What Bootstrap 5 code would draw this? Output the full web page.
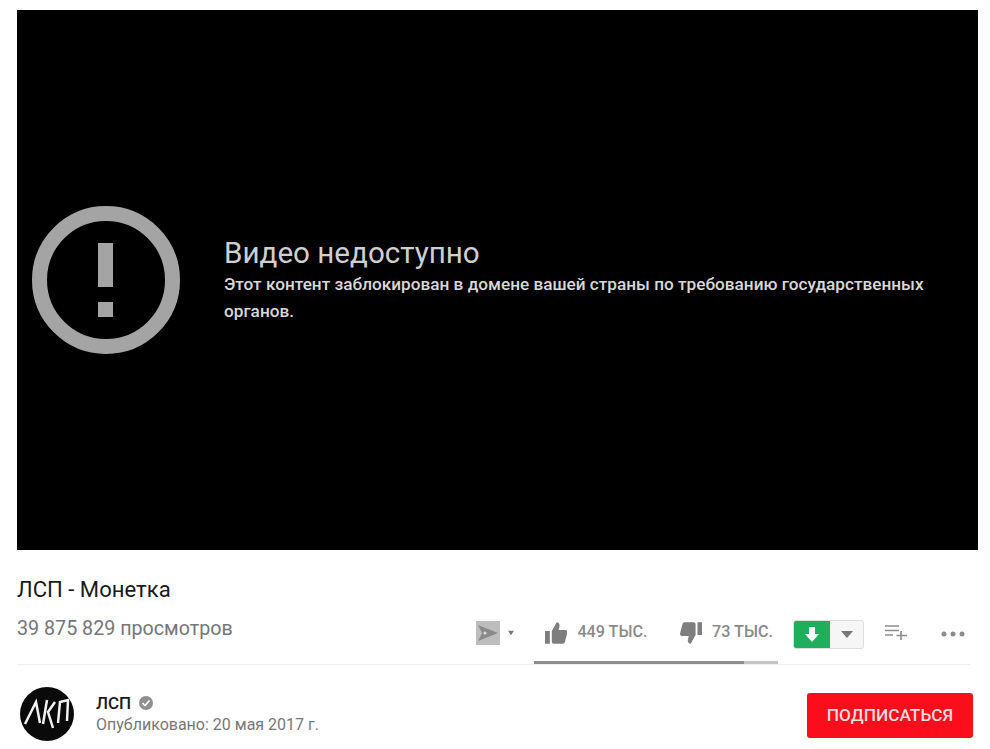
<!DOCTYPE html>
<html lang="ru">

<head>
    <meta charset="UTF-8">
    <meta name="viewport" content="width=device-width, initial-scale=1.0">
    <title>ЛСП - Монетка</title>
    <link href="https://cdn.jsdelivr.net/npm/bootstrap@5.3.0/dist/css/bootstrap.min.css" rel="stylesheet">
    <style>
        body {
            font-family: Roboto, 'Noto Sans', sans-serif;
            background-color: #fff;
            overflow: hidden;
        }

        .watch-page {
            padding: 10px 12px 0 17px;
        }

        .player-box {
            height: 540px;
            background-color: #000;
            padding-left: 15px;
            gap: 44px;
        }

        .player-title {
            font-size: 29.6px;
            line-height: 32px;
            font-weight: 400;
            color: #cfcfcf;
            margin: 2px 0 2px;
        }

        .player-text {
            font-size: 17.2px;
            line-height: 27px;
            font-weight: 500;
            color: #d8d8d8;
            width: 715px;
        }

        .video-name {
            font-size: 22.1px;
            line-height: 28px;
            color: #1a1a1a;
            margin: 25px 0 0;
            font-weight: 400;
        }

        .info-row {
            height: 62px;
            margin-right: 8px;
            border-bottom: 1px solid #eee;
        }

        .view-count {
            font-size: 19.7px;
            line-height: 24px;
            color: #767676;
            margin-top: 14px;
        }

        .rate-group {
            width: 244px;
            height: 61px;
        }

        .rate-items {
            height: 58px;
            padding: 1px 5px 0 11px;
            gap: 10px;
        }

        .rate-num {
            font-size: 16.2px;
            font-weight: 500;
            color: #8a8a8a;
            white-space: nowrap;
        }

        .dislike-icon {
            margin-left: 22px;
        }

        .rate-bar {
            height: 3px;
            background-color: #c4c4c4;
        }

        .rate-bar-fill {
            background-color: #8c8c8c;
        }

        .share-box {
            height: 58px;
            padding-top: 1px;
            margin-right: 20px;
        }

        .dl-btn {
            width: 71px;
            height: 29px;
            margin: 17px 0 0 15px;
            border: 1px solid #ddd;
            border-radius: 3px;
            background-color: #f6f6f6;
            overflow: hidden;
        }

        .dl-green {
            width: 37px;
            margin: -1px 0 -1px -1px;
            background-color: #1fae5c;
        }

        .more-box {
            height: 58px;
            padding: 0 0 0 21px;
        }

        .dots-icon {
            margin: 3px 5px 0 34px;
        }

        .channel-row {
            padding: 22px 5px 0 3px;
        }

        .channel-pic {
            width: 54px;
            height: 54px;
            margin-right: 22px;
            flex-shrink: 0;
        }

        .channel-text {
            margin-top: 5px;
        }

        .channel-name {
            font-size: 17px;
            line-height: 22px;
            font-weight: 500;
            color: #1a1a1a;
        }

        .publish-date {
            font-size: 16px;
            line-height: 21px;
            color: #777;
        }

        .subscribe-btn {
            width: 166px;
            height: 45px;
            padding: 0;
            margin-top: 6px;
            background-color: #fb0d1b;
            border: 0;
            border-radius: 3px;
            color: #f6dcdc;
            font-size: 17.3px;
            font-weight: 500;
        }
    </style>
</head>

<body>
    <div class="watch-page">
        <div class="player-box d-flex align-items-center">
            <svg width="148" height="148" viewBox="0 0 148 148" class="flex-shrink-0">
                <circle cx="74" cy="74" r="66.5" fill="none" stroke="#a4a4a4" stroke-width="15" />
                <rect x="66" y="37" width="15" height="44" fill="#a4a4a4" />
                <rect x="66" y="96" width="15" height="15" fill="#a4a4a4" />
            </svg>
            <div>
                <h2 class="player-title">Видео недоступно</h2>
                <div class="player-text">Этот контент заблокирован в домене вашей страны по требованию государственных органов.</div>
            </div>
        </div>

        <h1 class="video-name">ЛСП - Монетка</h1>

        <div class="info-row d-flex justify-content-between">
            <div class="view-count">39 875 829 просмотров</div>
            <div class="d-flex">
                <div class="share-box d-flex align-items-center">
                    <svg width="24" height="24" viewBox="0 0 24 24">
                        <rect width="24" height="24" fill="#bdbdbd" />
                        <path d="M2 4l20 8-20 8 4-8z" fill="#8a8a8a" />
                        <circle cx="9" cy="12" r="1.6" fill="#ddd" />
                    </svg>
                    <svg width="6" height="6" viewBox="0 0 8 6" class="ms-2">
                        <path d="M0 0h8L4 6z" fill="#777" />
                    </svg>
                </div>
                <div class="rate-group">
                    <div class="rate-items d-flex align-items-center">
                        <svg width="23" height="22" viewBox="0 0 23 22">
                            <path d="M0 9h5v13H0zM7 9l5-9c2 0 3 1.5 3 3.5L14 8h7c1.5 0 2 1 2 2.2L20.5 20c-.3 1.2-1 2-2.500 2H9c-1.200 0-2-.8-2-2z" fill="#7e7e7e" />
                        </svg>
                        <span class="rate-num">449 ТЫС.</span>
                        <svg width="23" height="22" viewBox="0 0 23 22" class="dislike-icon">
                            <path d="M23 13h-5V0h5zM16 13l-5 9c-2 0-3-1.5-3-3.5L9 14H2c-1.5 0-2-1-2-2.2L2.500 2C2.800.8 3.500 0 5 0h9c1.200 0 2 .8 2 2z" fill="#7e7e7e" />
                        </svg>
                        <span class="rate-num">73 ТЫС.</span>
                    </div>
                    <div class="rate-bar">
                        <div class="rate-bar-fill h-100" style="width:86%"></div>
                    </div>
                </div>
                <div class="dl-btn d-flex">
                    <div class="dl-green d-flex align-items-center justify-content-center">
                        <svg width="14" height="15" viewBox="0 0 14 15">
                            <path d="M4 0h6v7h4l-7 8-7-8h4z" fill="#fff" />
                        </svg>
                    </div>
                    <div class="flex-grow-1 d-flex align-items-center justify-content-center">
                        <svg width="12" height="7" viewBox="0 0 12 7">
                            <path d="M0 0h12L6 7z" fill="#777" />
                        </svg>
                    </div>
                </div>
                <div class="more-box d-flex align-items-center">
                    <svg width="22" height="16" viewBox="0 0 22 16">
                        <path d="M0 2h14M0 6.5h14M0 11h8M16 7v9M11.5 11.5H22" fill="none" stroke="#8c8c8c" stroke-width="1.6" />
                    </svg>
                    <svg width="24" height="6" viewBox="0 0 24 6" class="dots-icon">
                        <circle cx="3" cy="3" r="2.5" fill="#8c8c8c" />
                        <circle cx="12" cy="3" r="2.5" fill="#8c8c8c" />
                        <circle cx="21" cy="3" r="2.5" fill="#8c8c8c" />
                    </svg>
                </div>
            </div>
        </div>

        <div class="channel-row d-flex align-items-start">
            <svg class="channel-pic" viewBox="0 0 54 54">
                <circle cx="27" cy="27" r="27" fill="#0a0a0a" />
                <path d="M5 37L16 15L20 36M27 13L23 37M35 15L28 25L33 41M38 36L40 15L48 13L47 34" fill="none" stroke="#f2f2f2" stroke-width="2.5" />
            </svg>
            <div class="channel-text flex-grow-1">
                <div class="channel-name d-flex align-items-center gap-2">
                    ЛСП
                    <svg width="14" height="14" viewBox="0 0 14 14">
                        <circle cx="7" cy="7" r="7" fill="#8f8f8f" />
                        <path d="M3.5 7l2.5 2.5 4.5-5" fill="none" stroke="#fff" stroke-width="1.7" />
                    </svg>
                </div>
                <div class="publish-date">Опубликовано: 20 мая 2017 г.</div>
            </div>
            <button class="subscribe-btn btn" type="button">ПОДПИСАТЬСЯ</button>
        </div>
    </div>

    <script src="https://cdn.jsdelivr.net/npm/bootstrap@5.3.0/dist/js/bootstrap.bundle.min.js"></script>
</body>

</html>
